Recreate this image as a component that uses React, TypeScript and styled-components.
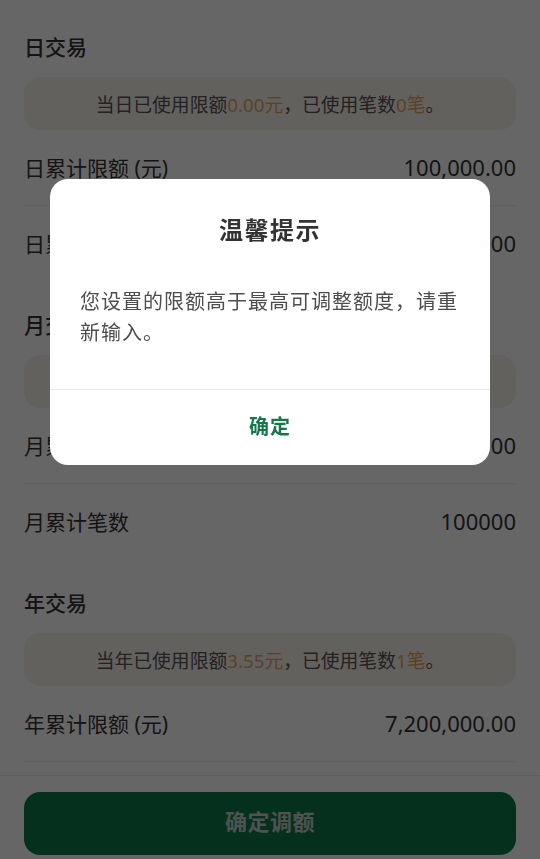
import styled, { createGlobalStyle } from 'styled-components';

const GlobalStyle = createGlobalStyle`
    html, body {
        margin: 0;
        padding: 0;
        background: #ffffff;
        font-family: "Noto Sans", "Noto Sans CJK SC", sans-serif;
        color: #333333;
    }
`;

type Row = { label: string; value: string };
type Section = { title: string; prefix: string; amount: string; count: string; rows: Row[] };

const sections: Section[] = [
    {
        title: '日交易',
        prefix: '当日',
        amount: '0.00',
        count: '0',
        rows: [
            { label: '日累计限额 (元)', value: '100,000.00' },
            { label: '日累计笔数', value: '100,000.00' },
        ],
    },
    {
        title: '月交易',
        prefix: '当月',
        amount: '0.00',
        count: '0',
        rows: [
            { label: '月累计限额 (元)', value: '3,000,000.00' },
            { label: '月累计笔数', value: '100000' },
        ],
    },
    {
        title: '年交易',
        prefix: '当年',
        amount: '3.55',
        count: '1',
        rows: [
            { label: '年累计限额 (元)', value: '7,200,000.00' },
            { label: '年累计笔数', value: '100000' },
        ],
    },
];

export default function App() {
    return (
        <>
            <GlobalStyle />
            <Page>
                <Content>
                    {sections.map((s) => (
                        <SectionBlock key={s.title}>
                            <SectionTitle>{s.title}</SectionTitle>
                            <Notice>
                                {s.prefix}已使用限额<Hl>{s.amount}元</Hl>，已使用笔数<Hl>{s.count}笔</Hl>。
                            </Notice>
                            {s.rows.map((r) => (
                                <LimitRow key={r.label}>
                                    <Label>{r.label}</Label>
                                    <Value>{r.value}</Value>
                                </LimitRow>
                            ))}
                        </SectionBlock>
                    ))}
                </Content>
                <Footer>
                    <SubmitButton>确定调额</SubmitButton>
                </Footer>
            </Page>

            <Mask>
                <Dialog>
                    <DialogTitle>温馨提示</DialogTitle>
                    <DialogBody>您设置的限额高于最高可调整额度，请重新输入。</DialogBody>
                    <DialogAction>确定</DialogAction>
                </Dialog>
            </Mask>
        </>
    );
}

const Page = styled.div`
    height: 100vh;
    display: flex;
    flex-direction: column;
    overflow: hidden;
`;

const Content = styled.div`
    flex: 1;
    overflow: hidden;
    padding: 3px 24px 0 24px;
`;

const SectionBlock = styled.section`
    display: flex;
    flex-direction: column;
`;

const SectionTitle = styled.h2`
    margin: 0;
    padding-top: 29px;
    height: 30px;
    line-height: 30px;
    font-size: 21px;
    font-weight: 500;
    color: #333333;
`;

const Notice = styled.div`
    margin-top: 15px;
    height: 53px;
    border-radius: 16px;
    background: #f8f3ea;
    display: flex;
    align-items: center;
    justify-content: center;
    font-size: 18.8px;
    color: #555555;
`;

const Hl = styled.span`
    color: #e3a262;
`;

const LimitRow = styled.div`
    height: 73px;
    padding-bottom: 2px;
    display: flex;
    align-items: center;
    justify-content: space-between;
    border-bottom: 1px solid #ededed;

    &:last-child {
        border-bottom: none;
    }
`;

const Label = styled.span`
    font-size: 21px;
    color: #333333;
`;

const Value = styled.span`
    font-family: "Noto Sans", sans-serif;
    font-size: 22px;
    color: #333333;
`;

const Footer = styled.div`
    flex: none;
    background: #ffffff;
    border-top: 1px solid #eeeeee;
    padding: 16px 24px 4px 24px;
`;

const SubmitButton = styled.button`
    width: 100%;
    height: 63px;
    padding: 0 0 7px 0;
    border: none;
    border-radius: 16px;
    background: #0f784b;
    color: #c3cec7;
    font-family: "Noto Sans CJK SC", sans-serif;
    font-size: 22px;
    font-weight: 700;
    letter-spacing: 0.5px;
`;

const Mask = styled.div`
    position: fixed;
    inset: 0;
    background: rgba(0, 0, 0, 0.6);
    display: flex;
    justify-content: center;
    align-items: flex-start;
    padding-top: 179px;
`;

const Dialog = styled.div`
    width: 440px;
    background: #ffffff;
    border-radius: 18px;
    overflow: hidden;
    display: flex;
    flex-direction: column;
`;

const DialogTitle = styled.div`
    padding-top: 34px;
    height: 32px;
    line-height: 32px;
    text-align: center;
    font-family: "Noto Sans CJK SC", sans-serif;
    font-size: 24px;
    font-weight: 700;
    letter-spacing: 1.5px;
    color: #333333;
`;

const DialogBody = styled.div`
    padding: 40px 30px 42px 30px;
    font-family: "Noto Sans CJK SC", sans-serif;
    font-size: 20px;
    line-height: 31px;
    letter-spacing: 1px;
    color: #4d4d4d;
    border-bottom: 1px solid #e8e8e8;
`;

const DialogAction = styled.div`
    height: 75px;
    box-sizing: border-box;
    padding-bottom: 4px;
    display: flex;
    align-items: center;
    justify-content: center;
    font-family: "Noto Sans CJK SC", sans-serif;
    font-size: 20px;
    font-weight: 700;
    letter-spacing: 1px;
    color: #18774a;
`;
